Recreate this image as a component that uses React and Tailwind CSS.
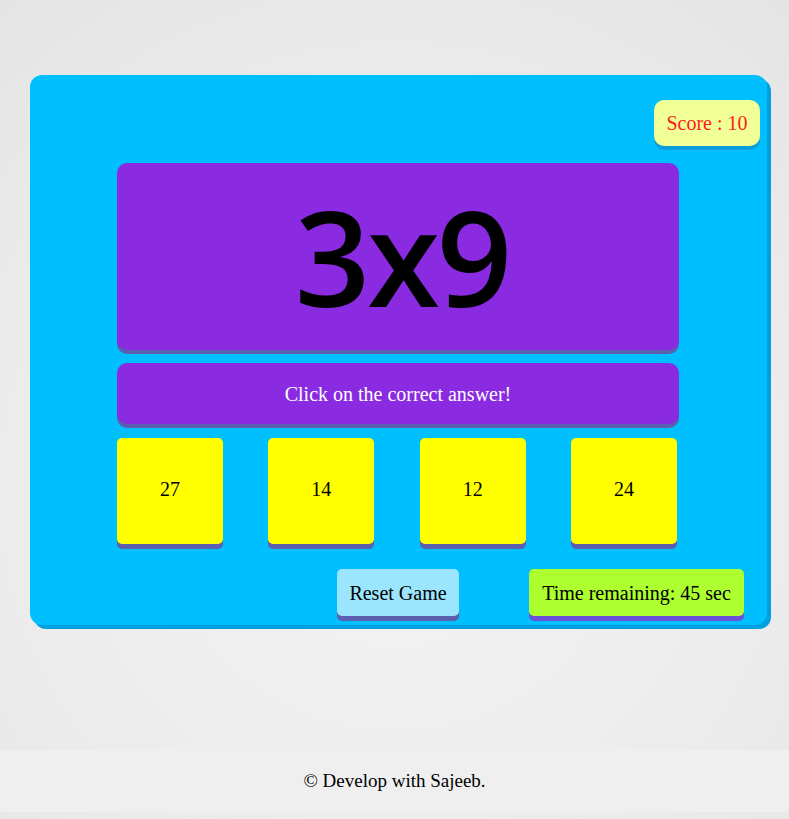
import React from 'react'

const ANSWERS = [27, 14, 12, 24]

export default function App() {
  return (
    <div
      className="min-h-[819px] bg-[radial-gradient(circle_at_50%_60%,#f4f4f4_0%,#ececec_60%,#e4e4e4_100%)] font-['Liberation_Serif',serif] text-black"
    >
      <div className="pt-[75px] pl-[30px]">
        {/* game box */}
        <div className="w-[737px] h-[550px] rounded-[12px] bg-[#00bfff] shadow-[4px_4px_0_#00a0e0] flex flex-col">
          {/* score */}
          <div className="flex justify-end pt-[25px] pr-[7px]">
            <div className="w-[106px] h-[46px] rounded-[10px] bg-[#f0ff96] shadow-[0_4px_0_#0a9fdc] flex items-center justify-center text-[20px] text-[#ff1a1a]">
              Score : 10
            </div>
          </div>

          <div className="ml-[87px] w-[562px]">
            {/* question */}
            <div className="mt-[17px] h-[187px] rounded-[10px] bg-[#8a2be2] shadow-[0_4px_0_#5a5fb0] flex items-center justify-center">
              <span className="font-['Comic_Sans_MS','Open_Sans',sans-serif] font-semibold text-[132px] leading-none tracking-[-3px] pb-[2px] pl-[8px]">
                3x9
              </span>
            </div>

            {/* instruction */}
            <div className="mt-[13px] h-[61px] rounded-[10px] bg-[#8a2be2] shadow-[0_4px_0_#5a5fb0] flex items-center justify-center text-white text-[20px]">
              Click on the correct answer!
            </div>

            {/* answers */}
            <div className="mt-[14px] w-[560px] flex justify-between">
              {ANSWERS.map(a => (
                <div
                  key={a}
                  className="w-[106px] h-[106px] rounded-[5px] bg-[#ffff00] shadow-[0_5px_0_#5a5fb0] flex items-center justify-center text-[20px] pb-[4px]"
                >
                  {a}
                </div>
              ))}
            </div>
          </div>

          {/* buttons */}
          <div className="mt-[25px] flex">
            <div className="ml-[307px] w-[122px] h-[47px] rounded-[5px] bg-[#9ce5ff] shadow-[0_5px_0_#5a5fb0] flex items-center justify-center text-[20px]">
              Reset Game
            </div>
            <div className="ml-[70px] w-[215px] h-[47px] rounded-[5px] bg-[#adff2f] shadow-[0_5px_0_#6a4fd8] flex items-center justify-center text-[20px]">
              Time remaining: 45 sec
            </div>
          </div>
        </div>
      </div>

      {/* footer */}
      <div className="mt-[125px] h-[62px] bg-[#efefef] flex items-center justify-center text-[19px]">
        © Develop with Sajeeb.
      </div>
    </div>
  )
}
